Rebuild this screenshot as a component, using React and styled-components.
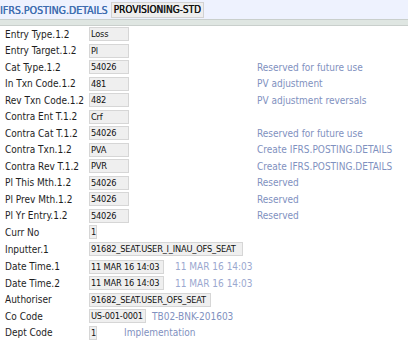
import React from 'react'
import styled, { createGlobalStyle } from 'styled-components'

const Global = createGlobalStyle`
body {
  margin: 0;
  background: #ffffff;
  font-family: "DejaVu Sans Condensed", "DejaVu Sans", sans-serif;
  font-size: 10px;
  color: #1e1e1e;
}
`

const Page = styled.div`
width: 408px;
height: 344px;
overflow: hidden;
`

const TopBar = styled.div`
height: 19px;
background: #eef2fe;
display: flex;
align-items: center;
gap: 3px;
`

const Title = styled.div`
color: #3d6db0;
font-size: 10.5px;
text-shadow: 0.3px 0 0 #3d6db0;
`

const RecordId = styled.div`
background: #eeeeee;
border: 1px solid #d2d2d2;
font-size: 10px;
color: #111;
text-shadow: 0.4px 0 0 #111;
padding: 0 2px;
height: 14px;
line-height: 14px;
`

const Strip = styled.div`
height: 5px;
background: #dfe6e2;
border-top: 1px solid #c9cfcc;
border-bottom: 1px solid #c9cfcc;
`

const Rows = styled.div`
display: flex;
flex-direction: column;
`

const Row = styled.div`
display: flex;
align-items: center;
height: ${p => p.$h || 16.5}px;
`

const Label = styled.div`
width: 84px;
padding-left: 5px;
flex-shrink: 0;
white-space: nowrap;
`

const Field = styled.div`
width: ${p => p.$w}px;
height: 14px;
line-height: 12px;
font-size: 9.2px;
letter-spacing: -0.2px;
color: #111;
background: #efefef;
border: 1px solid #d6d6d6;
padding-left: 1px;
box-sizing: border-box;
white-space: nowrap;
overflow: hidden;
flex-shrink: 0;
`

const Desc = styled.div`
margin-left: ${p => p.$gap}px;
color: ${p => p.$light ? '#9ba8cf' : '#7f91c0'};
white-space: nowrap;
`

const rows = [
  ['Entry Type.1.2', 'Loss', 40],
  ['Entry Target.1.2', 'Pl', 40],
  ['Cat Type.1.2', '54026', 40, 'Reserved for future use', 128],
  ['In Txn Code.1.2', '481', 40, 'PV adjustment', 128],
  ['Rev Txn Code.1.2', '482', 40, 'PV adjustment reversals', 128],
  ['Contra Ent T.1.2', 'Crf', 40],
  ['Contra Cat T.1.2', '54026', 40, 'Reserved for future use', 128],
  ['Contra Txn.1.2', 'PVA', 40, 'Create IFRS.POSTING.DETAILS', 128],
  ['Contra Rev T.1.2', 'PVR', 40, 'Create IFRS.POSTING.DETAILS', 128],
  ['Pl This Mth.1.2', '54026', 40, 'Reserved', 128],
  ['Pl Prev Mth.1.2', '54026', 40, 'Reserved', 128],
  ['Pl Yr Entry.1.2', '54026', 40, 'Reserved', 128],
  ['Curr No', '1', 8],
  ['Inputter.1', '91682_SEAT.USER_I_INAU_OFS_SEAT', 154, null, 0, 17.5],
  ['Date Time.1', '11 MAR 16 14:03', 75, '11 MAR 16 14:03', 11, 17, true],
  ['Date Time.2', '11 MAR 16 14:03', 75, '11 MAR 16 14:03', 11, 16.5, true],
  ['Authoriser', '91682_SEAT.USER_OFS_SEAT', 122],
  ['Co Code', 'US-001-0001', 57, 'TB02-BNK-201603', 6],
  ['Dept Code', '1', 8, 'Implementation', 27],
]

export default function App() {
  return (
    <Page>
      <Global />
      <TopBar>
        <Title>IFRS.POSTING.DETAILS</Title>
        <RecordId>PROVISIONING-STD</RecordId>
      </TopBar>
      <Strip />
      <Rows>
        {rows.map(([label, value, w, desc, gap, h, light]) => (
          <Row key={label} $h={h}>
            <Label>{label}</Label>
            <Field $w={w}>{value}</Field>
            {desc && <Desc $gap={gap} $light={light}>{desc}</Desc>}
          </Row>
        ))}
      </Rows>
    </Page>
  )
}
